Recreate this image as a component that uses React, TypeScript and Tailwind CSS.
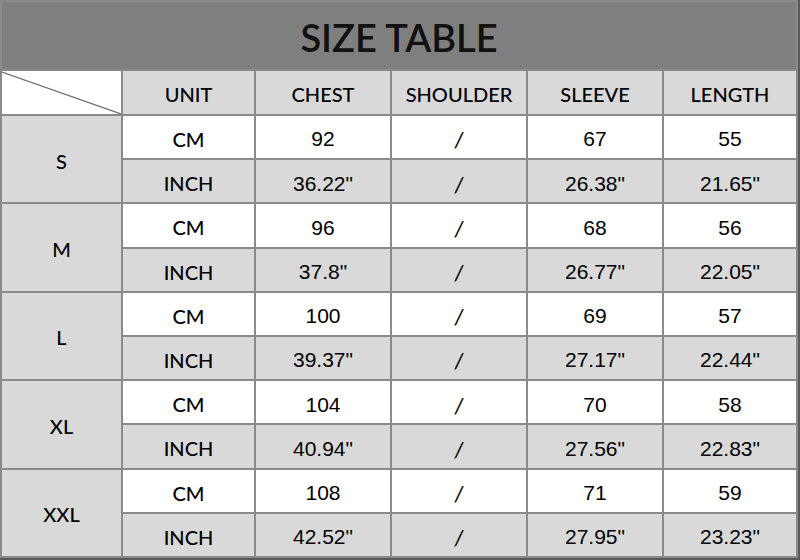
import React from "react";

const sizes = [
  { s: "S", rs: "row-start-3", cm: ["92", "/", "67", "55"], inch: ["36.22\"", "/", "26.38\"", "21.65\""] },
  { s: "M", rs: "row-start-5", cm: ["96", "/", "68", "56"], inch: ["37.8\"", "/", "26.77\"", "22.05\""] },
  { s: "L", rs: "row-start-7", cm: ["100", "/", "69", "57"], inch: ["39.37\"", "/", "27.17\"", "22.44\""] },
  { s: "XL", rs: "row-start-9", cm: ["104", "/", "70", "58"], inch: ["40.94\"", "/", "27.56\"", "22.83\""] },
  { s: "XXL", rs: "row-start-11", cm: ["108", "/", "71", "59"], inch: ["42.52\"", "/", "27.95\"", "23.23\""] },
];

const headers = ["UNIT", "CHEST", "SHOULDER", "SLEEVE", "LENGTH"];

const cal = "font-['Lato','Open_Sans',sans-serif]";
const ari = "font-['Liberation_Sans',Arial,sans-serif]";

function Val({ v, bg }: { v: string; bg: string }) {
  if (v === "/") {
    return (
      <div className={`${bg} ${cal} flex items-center justify-center pt-[4px] text-[21px] font-medium italic text-black`}>
        /
      </div>
    );
  }
  return (
    <div className={`${bg} ${ari} flex items-center justify-center pt-[4px] text-[21px] text-black`}>
      {v}
    </div>
  );
}

export default function App() {
  return (
    <div className="h-[560px] w-[800px] bg-white">
      <div className="grid h-[560px] w-[800px] grid-cols-[119px_131px_134px_134px_134px_132px] grid-rows-[67px_43px_repeat(10,1fr)] gap-[2px] border-b-2 border-r-2 border-[#5a5a5a] bg-[#8a8a8a] p-[2px]">
        <div className={`${cal} col-span-6 flex items-center justify-center bg-[#7f7f7f] pt-[3px] text-[38px] font-semibold text-[#111]`}>
          SIZE TABLE
        </div>
        <div className="relative bg-white">
          <svg className="absolute inset-0" width="119" height="43" viewBox="0 0 119 43">
            <line x1="0" y1="1" x2="119" y2="43" stroke="#707070" strokeWidth="1.2" />
          </svg>
        </div>
        {headers.map((h) => (
          <div
            key={h}
            className={`${cal} flex items-center justify-center bg-[#d9d9d9] pt-[3px] text-[20px] font-medium text-black`}
          >
            {h}
          </div>
        ))}
        {sizes.map((row) => (
          <React.Fragment key={row.s}>
            <div
              className={`${cal} ${row.rs} col-start-1 row-span-2 flex items-center justify-center bg-[#d9d9d9] pt-[3px] text-[20px] font-medium text-black`}
            >
              {row.s}
            </div>
            <div className={`${cal} flex items-center justify-center bg-white pt-[4px] text-[20px] font-medium text-black`}>
              CM
            </div>
            {row.cm.map((v, j) => (
              <Val key={j} v={v} bg="bg-white" />
            ))}
            <div className={`${cal} col-start-2 flex items-center justify-center bg-[#d9d9d9] pt-[4px] text-[20px] font-medium text-black`}>
              INCH
            </div>
            {row.inch.map((v, j) => (
              <Val key={j} v={v} bg="bg-[#d9d9d9]" />
            ))}
          </React.Fragment>
        ))}
      </div>
    </div>
  );
}
